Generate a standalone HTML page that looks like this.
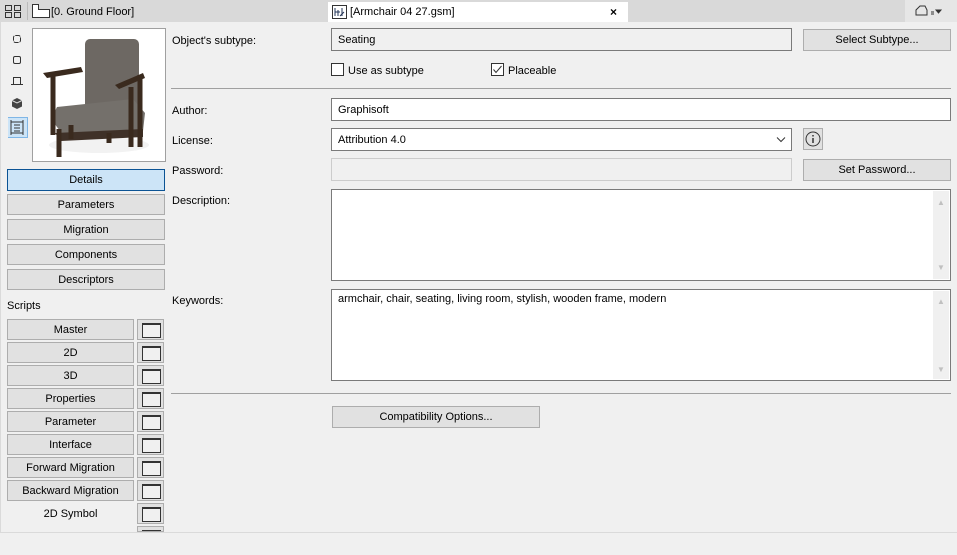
<!DOCTYPE html>
<html><head><meta charset="utf-8"><style>
*{box-sizing:border-box;margin:0;padding:0}
body{width:957px;height:555px;background:#f0f0f0;font-family:"Liberation Sans",sans-serif;font-size:11px;color:#000;position:relative;overflow:hidden}
.a{position:absolute}
.btn{position:absolute;background:#e1e1e1;border:1px solid #adadad;text-align:center;line-height:20px}
.fld{position:absolute;background:#fff;border:1px solid #7a7a7a;padding-left:6px;line-height:22px}
.ic{position:absolute;width:27px;height:21px;background:#e1e1e1;border:1px solid #adadad}
.ic:after{content:"";position:absolute;left:4px;top:3px;width:17px;height:12px;border:1px solid #333;border-top:2px solid #333;background:#f0f0f0}
.lbl{position:absolute;left:172px}
.sb{position:absolute;right:1px;top:1px;bottom:1px;width:16px;background:#f0f0f0;color:#c0c0c0;font-size:8px;text-align:center}
</style></head><body>
<div class="a" style="left:0;top:0;width:957px;height:22px;background:#d9d9d9"></div>
<svg class="a" style="left:5px;top:5px" width="16" height="13"><rect x="0.5" y="0.5" width="6" height="5" fill="none" stroke="#333"/><rect x="9.5" y="0.5" width="6" height="5" fill="none" stroke="#333"/><rect x="0.5" y="7.5" width="6" height="5" fill="none" stroke="#333"/><rect x="9.5" y="7.5" width="6" height="5" fill="none" stroke="#333"/></svg>
<div class="a" style="left:27px;top:2px;width:1px;height:18px;background:#bbb"></div>
<svg class="a" style="left:32px;top:4px" width="18" height="14"><path d="M0.5 13.5V0.5H6.5V5.5H17.5V13.5Z" fill="#fff" stroke="#333"/></svg>
<div class="a" style="left:51px;top:6px">[0. Ground Floor]</div>
<div class="a" style="left:328px;top:2px;width:300px;height:20px;background:#fff"></div>
<svg class="a" style="left:332px;top:5px" width="15" height="14"><rect x="0.5" y="0.5" width="14" height="13" fill="#fff" stroke="#333"/><path d="M3 3v8M3 7h5M6 5v6M10 3v8M8 11l4-4" stroke="#235" fill="none"/></svg>
<div class="a" style="left:350px;top:6px">[Armchair 04 27.gsm]</div>
<div class="a" style="left:610px;top:5px;font-size:12px;font-weight:bold">×</div>
<div class="a" style="left:905px;top:0;width:52px;height:22px;background:#e6e6e6"></div>
<svg class="a" style="left:915px;top:5px" width="36" height="12"><path d="M1 10V5L5 1H10L12 5V10Z" fill="none" stroke="#333"/><path d="M16 7h3M16 9h3M21 5h5l-2.5 3z" stroke="#333" fill="#333"/></svg>
<svg class="a" style="left:8px;top:30px" width="22" height="110">
<rect x="5.5" y="5.5" width="7" height="7" rx="2" fill="none" stroke="#333" stroke-dasharray="5 1"/>
<rect x="5.5" y="26.5" width="7" height="7" rx="1.5" fill="none" stroke="#333"/>
<path d="M5.5 54V47.5H12.5V54M3 54.5H15" fill="none" stroke="#333"/>
<path d="M9 68l5 2.5v6L9 79l-5-2.5v-6z" fill="#444"/><path d="M4 70.5L9 73l5-2.5" stroke="#ddd" fill="none"/>
<rect x="-1.5" y="87.5" width="21" height="20" fill="#cce4f7" stroke="#7fb6e6"/>
<path d="M3 90v15M15 90v15M3 92h12M3 103h12M6 95h6M6 98h6M6 101h6" stroke="#333" fill="none"/>
</svg>
<div class="a" style="left:32px;top:28px;width:134px;height:134px;background:#fff;border:1px solid #a0a0a0"></div>
<svg class="a" style="left:33px;top:29px" width="132" height="132">
<ellipse cx="66" cy="116" rx="50" ry="8" fill="#f2f2f2"/>
<rect x="52" y="10" width="54" height="72" rx="5" fill="#6d6863"/>
<path d="M18 90 L24 78 L100 70 L112 84 L110 102 L30 106 Z" fill="#74706b"/>
<path d="M22 104 L110 100 L110 108 L28 112Z" fill="#3f3128"/>
<path d="M10 44 L48 38 L50 43 L14 49Z" fill="#3a2a1e"/>
<path d="M82 56 L110 44 L112 49 L86 60Z" fill="#3a2a1e"/>
<path d="M20 46v60M26 100v28M98 58v60M107 46v72M38 96v14M76 104v10" stroke="#3a2a1e" stroke-width="5"/>
</svg>
<div class="btn" style="left:7px;top:169px;width:158px;height:22px;background:#cce4f7;border-color:#0b5394">Details</div>
<div class="btn" style="left:7px;top:194px;width:158px;height:21px">Parameters</div>
<div class="btn" style="left:7px;top:219px;width:158px;height:21px">Migration</div>
<div class="btn" style="left:7px;top:244px;width:158px;height:21px">Components</div>
<div class="btn" style="left:7px;top:269px;width:158px;height:21px">Descriptors</div>
<div class="a" style="left:7px;top:300px">Scripts</div>
<div class="btn" style="left:7px;top:319px;width:127px;height:21px">Master</div><div class="ic" style="left:137px;top:319px"></div>
<div class="btn" style="left:7px;top:342px;width:127px;height:21px">2D</div><div class="ic" style="left:137px;top:342px"></div>
<div class="btn" style="left:7px;top:365px;width:127px;height:21px">3D</div><div class="ic" style="left:137px;top:365px"></div>
<div class="btn" style="left:7px;top:388px;width:127px;height:21px">Properties</div><div class="ic" style="left:137px;top:388px"></div>
<div class="btn" style="left:7px;top:411px;width:127px;height:21px">Parameter</div><div class="ic" style="left:137px;top:411px"></div>
<div class="btn" style="left:7px;top:434px;width:127px;height:21px">Interface</div><div class="ic" style="left:137px;top:434px"></div>
<div class="btn" style="left:7px;top:457px;width:127px;height:21px">Forward Migration</div><div class="ic" style="left:137px;top:457px"></div>
<div class="btn" style="left:7px;top:480px;width:127px;height:21px">Backward Migration</div><div class="ic" style="left:137px;top:480px"></div>
<div class="a" style="left:7px;top:503px;width:127px;text-align:center;line-height:22px">2D Symbol</div><div class="ic" style="left:137px;top:503px"></div>
<div class="ic" style="left:137px;top:526px;height:6px;overflow:hidden"></div>
<div class="a" style="left:0;top:532px;width:957px;height:23px;background:#f0f0f0;border-top:1px solid #dadada"></div>
<div class="a" style="left:0;top:22px;width:1px;height:510px;background:#dadada"></div>
<div class="lbl" style="top:35px">Object's subtype:</div>
<div class="fld" style="left:331px;top:28px;width:461px;height:23px;background:#f0f0f0">Seating</div>
<div class="btn" style="left:803px;top:29px;width:148px;height:22px;line-height:21px">Select Subtype...</div>
<div class="a" style="left:331px;top:63px;width:13px;height:13px;border:1px solid #333;background:#fff"></div>
<div class="a" style="left:348px;top:65px">Use as subtype</div>
<div class="a" style="left:491px;top:63px;width:13px;height:13px;border:1px solid #333;background:#fff"></div>
<svg class="a" style="left:492px;top:64px" width="11" height="11"><path d="M1.5 5.5L4 8.5L9.5 2" fill="none" stroke="#333"/></svg>
<div class="a" style="left:508px;top:65px">Placeable</div>
<div class="a" style="left:171px;top:88px;width:780px;height:1px;background:#a0a0a0"></div>
<div class="lbl" style="top:105px">Author:</div>
<div class="fld" style="left:331px;top:98px;width:620px;height:23px">Graphisoft</div>
<div class="lbl" style="top:135px">License:</div>
<div class="fld" style="left:331px;top:128px;width:461px;height:23px">Attribution 4.0</div>
<svg class="a" style="left:776px;top:136px" width="10" height="7"><path d="M1 1.5L5 5.5L9 1.5" fill="none" stroke="#333"/></svg>
<div class="a" style="left:803px;top:128px;width:20px;height:22px;border:1px solid #adadad;background:#e1e1e1"></div>
<svg class="a" style="left:805px;top:131px" width="16" height="16"><circle cx="8" cy="8" r="7" fill="none" stroke="#333"/><path d="M8 7v5M8 4v1.5" stroke="#333" stroke-width="1.5"/></svg>
<div class="lbl" style="top:165px">Password:</div>
<div class="a" style="left:331px;top:158px;width:461px;height:23px;border:1px solid #ccc;background:#f0f0f0"></div>
<div class="btn" style="left:803px;top:159px;width:148px;height:22px;line-height:21px">Set Password...</div>
<div class="lbl" style="top:195px">Description:</div>
<div class="fld" style="left:331px;top:189px;width:620px;height:92px"><div class="sb"><div style="margin-top:1px">▲</div><div style="position:absolute;bottom:0;width:16px">▼</div></div></div>
<div class="lbl" style="top:295px">Keywords:</div>
<div class="fld" style="left:331px;top:289px;width:620px;height:92px;line-height:19px">armchair, chair, seating, living room, stylish, wooden frame, modern<div class="sb"><div style="margin-top:1px">▲</div><div style="position:absolute;bottom:0;width:16px">▼</div></div></div>
<div class="a" style="left:171px;top:393px;width:780px;height:1px;background:#a0a0a0"></div>
<div class="btn" style="left:332px;top:406px;width:208px;height:22px;line-height:21px">Compatibility Options...</div>
</body></html>
